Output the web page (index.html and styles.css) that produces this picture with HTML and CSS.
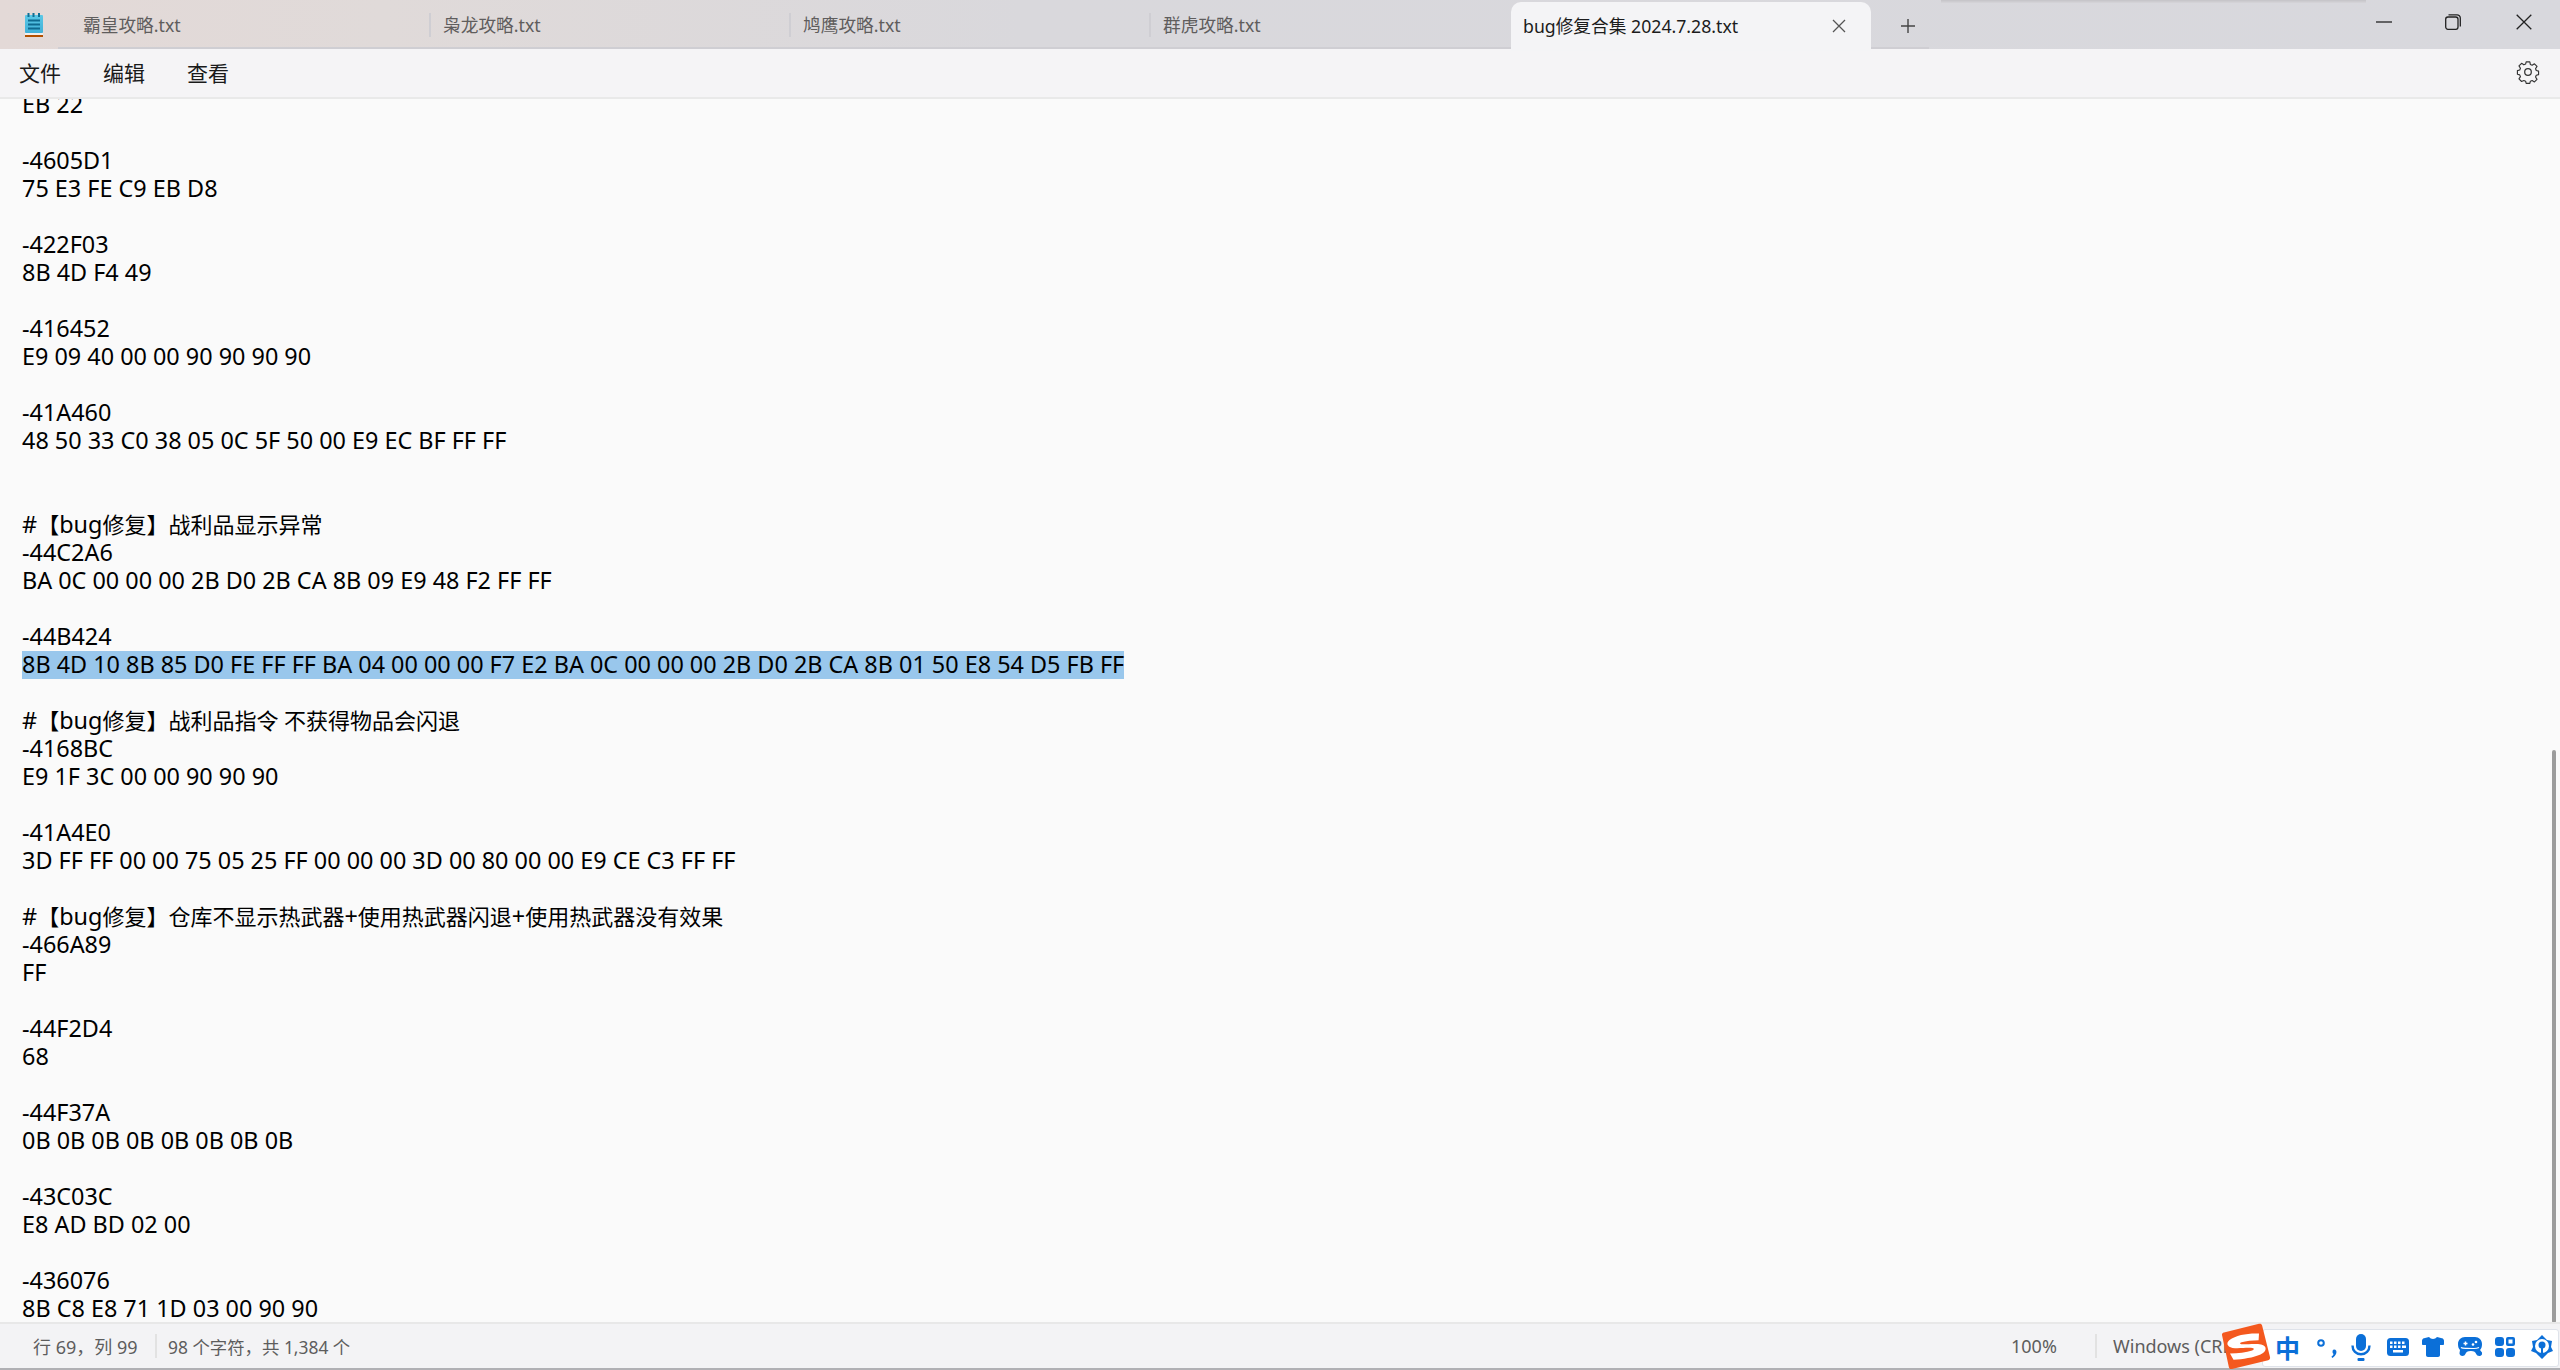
FILE: index.html
```html
<!DOCTYPE html>
<html lang="zh-CN">
<head>
<meta charset="utf-8">
<title>bug修复合集 2024.7.28.txt</title>
<link rel="stylesheet" href="styles.css">
</head>
<body>
<div class="window">
  <header class="titlebar">
    <div class="app-icon">
      <svg width="18" height="24" viewBox="0 0 18 24">
        <defs><linearGradient id="nb" x1="0" y1="0" x2="0" y2="1"><stop offset="0" stop-color="#5cc8e6"/><stop offset="1" stop-color="#3fb0d8"/></linearGradient></defs>
        <rect x="0" y="2" width="18" height="18" rx="1" fill="url(#nb)"/>
        <path d="M2.5 0h2v4h-2zM7.500 0h2v4h-2zM13 0h2v4h-2z" fill="#0f6f94"/>
        <path d="M3 6.500h12v2H3zM3 10.500h12v2H3zM3 14.500h12v2H3z" fill="#0f6a90"/>
        <rect x="0" y="20" width="18" height="2" fill="#f2efec"/>
        <rect x="0" y="22" width="18" height="2" fill="#b25000"/>
      </svg>
    </div>
    <nav class="tabstrip">
      <div class="tab">霸皇攻略.txt</div>
      <div class="tab tab-sep">枭龙攻略.txt</div>
      <div class="tab tab-sep">鸠鹰攻略.txt</div>
      <div class="tab tab-sep">群虎攻略.txt</div>
      <div class="tab tab-active">
        <span>bug修复合集 2024.7.28.txt</span>
        <svg class="tab-close" width="14" height="14" viewBox="0 0 14 14"><path d="M1 1l12 12M13 1L1 13" stroke="#555" stroke-width="1.300" fill="none"/></svg>
      </div>
      <div class="tab-add">
        <svg width="16" height="16" viewBox="0 0 16 16"><path d="M8 1v14M1 8h14" stroke="#444" stroke-width="1.400" fill="none"/></svg>
      </div>
    </nav>
    <div class="controls">
      <svg class="ctl-min" width="16" height="2" viewBox="0 0 16 2"><path d="M0 1h16" stroke="#222" stroke-width="1.300"/></svg>
      <svg class="ctl-max" width="16" height="16" viewBox="0 0 16 16"><rect x="0.700" y="3" width="12.300" height="12.300" rx="2.200" fill="none" stroke="#222" stroke-width="1.300"/><path d="M3.500 0.800h8.500a3.300 3.300 0 0 1 3.300 3.300v8.400" fill="none" stroke="#222" stroke-width="1.300"/></svg>
      <svg class="ctl-close" width="16" height="16" viewBox="0 0 16 16"><path d="M0.700 0.700l14.600 14.600M15.300 0.700L0.700 15.300" stroke="#222" stroke-width="1.300" fill="none"/></svg>
    </div>
    <div class="top-shadow"></div>
  </header>

  <div class="menubar">
    <div class="menu-items">
      <span>文件</span><span>编辑</span><span>查看</span>
    </div>
    <svg class="gear" width="24" height="24" viewBox="0 0 24 24" fill="none" stroke="#333" stroke-width="1.250" stroke-linejoin="round">
      <path d="M10 1.500h4l.6 2.900 1.900.8 2.500-1.600 2.800 2.800-1.600 2.500.8 1.900 2.500.7v3.900l-2.500.7-.8 1.900 1.600 2.500-2.800 2.800-2.500-1.600-1.900.8-.6 2.400h-4l-.6-2.400-1.900-.8L5 22.800l-2.800-2.800 1.600-2.500-.8-1.900-2.500-.7V11l2.500-.7.8-1.900-1.600-2.500L5 3.100l2.500 1.600 1.900-.8z" transform="translate(12 12) scale(.92) translate(-12 -12.500)"/>
      <circle cx="12" cy="12" r="3.300"/>
    </svg>
  </div>

  <main class="editor">
    <div class="doc">
      <div class="ln">EB 22</div>
      <div class="ln"></div>
      <div class="ln">-4605D1</div>
      <div class="ln">75 E3 FE C9 EB D8</div>
      <div class="ln"></div>
      <div class="ln">-422F03</div>
      <div class="ln">8B 4D F4 49</div>
      <div class="ln"></div>
      <div class="ln">-416452</div>
      <div class="ln">E9 09 40 00 00 90 90 90 90</div>
      <div class="ln"></div>
      <div class="ln">-41A460</div>
      <div class="ln">48 50 33 C0 38 05 0C 5F 50 00 E9 EC BF FF FF</div>
      <div class="ln"></div>
      <div class="ln"></div>
      <div class="ln">#<span class="cjk">【</span>bug<span class="cjk">修复】战利品显示异常</span></div>
      <div class="ln">-44C2A6</div>
      <div class="ln">BA 0C 00 00 00 2B D0 2B CA 8B 09 E9 48 F2 FF FF</div>
      <div class="ln"></div>
      <div class="ln">-44B424</div>
      <div class="ln"><span class="sel">8B 4D 10 8B 85 D0 FE FF FF BA 04 00 00 00 F7 E2 BA 0C 00 00 00 2B D0 2B CA 8B 01 50 E8 54 D5 FB FF</span></div>
      <div class="ln"></div>
      <div class="ln">#<span class="cjk">【</span>bug<span class="cjk">修复】战利品指令 不获得物品会闪退</span></div>
      <div class="ln">-4168BC</div>
      <div class="ln">E9 1F 3C 00 00 90 90 90</div>
      <div class="ln"></div>
      <div class="ln">-41A4E0</div>
      <div class="ln">3D FF FF 00 00 75 05 25 FF 00 00 00 3D 00 80 00 00 E9 CE C3 FF FF</div>
      <div class="ln"></div>
      <div class="ln">#<span class="cjk">【</span>bug<span class="cjk">修复】仓库不显示热武器</span>+<span class="cjk">使用热武器闪退</span>+<span class="cjk">使用热武器没有效果</span></div>
      <div class="ln">-466A89</div>
      <div class="ln">FF</div>
      <div class="ln"></div>
      <div class="ln">-44F2D4</div>
      <div class="ln">68</div>
      <div class="ln"></div>
      <div class="ln">-44F37A</div>
      <div class="ln">0B 0B 0B 0B 0B 0B 0B 0B</div>
      <div class="ln"></div>
      <div class="ln">-43C03C</div>
      <div class="ln">E8 AD BD 02 00</div>
      <div class="ln"></div>
      <div class="ln">-436076</div>
      <div class="ln">8B C8 E8 71 1D 03 00 90 90</div>
    </div>
    <div class="scroll-thumb"></div>
  </main>

  <footer class="statusbar">
    <div class="st st-pos">行 69，列 99</div>
    <div class="st-sep"></div>
    <div class="st st-count">98 个字符，共 1,384 个</div>
    <div class="st-spacer"></div>
    <div class="st st-zoom">100%</div>
    <div class="st-sep"></div>
    <div class="st st-enc">Windows (CRLF)</div>
  </footer>

  <div class="ime">
    <svg class="ime-logo" width="50" height="47" viewBox="0 0 50 47">
      <path d="M3 9.500 38 .8c1.500-.4 2.700.3 3.100 1.700L49 34c.4 1.500-.4 2.800-1.800 3.200L11 46c-1.500.3-2.700-.3-3.100-1.800L1 12c-.3-1.200.6-2.200 2-2.500z" fill="#f4581e"/>
      <path d="M38 10.500C27 10 15 12 8.500 17c-4.500 3.800-1.500 7.800 5.500 8.200 6 .3 13-.8 17.500-.1 2 .4 1.800 1.600-.3 2.300-6 1.700-14 3-22.200 3.100l3.500 6.300c9.500-.3 20-2.200 27-5.200 6.500-3 7-8.400.6-10-5.200-1.200-13.700-.1-19-.3-2.500-.1-2.600-1.300-.5-2 4.200-1.400 11-2 17-2.100z" fill="#fff"/>
    </svg>
    <span class="ime-zh">中</span>
    <svg class="ime-ic ic-punc" width="24" height="24" viewBox="0 0 24 24"><circle cx="5" cy="7" r="2.800" fill="none" stroke="#0b6fd8" stroke-width="2"/><path d="M18 13.500c2.200 0 3 2 2.200 4-.7 1.800-2 3.400-3.800 4.500l-1-1.200c1.100-.9 1.800-1.900 2.200-2.900-1.500-.6-1.400-4.400.4-4.400z" fill="#0b6fd8"/></svg>
    <svg class="ime-ic ic-mic" width="20" height="28" viewBox="0 0 20 28"><rect x="5" y="0" width="10" height="17" rx="5" fill="#0b6fd8"/><path d="M1.500 11.500c0 5.300 3.700 8.800 8.500 8.800s8.500-3.500 8.500-8.800" fill="none" stroke="#0b6fd8" stroke-width="2.400"/><rect x="6.500" y="24" width="7" height="3" rx="1" fill="#0b6fd8"/></svg>
    <svg class="ime-ic ic-kbd" width="22" height="18" viewBox="0 0 22 18"><rect width="22" height="18" rx="3.500" fill="#0b6fd8"/><path d="M3 3.500h2.500V6H3zM7 3.500h2.500V6H7zM11 3.500h2.500V6H11zM15 3.500h2.500V6H15zM3 7.500h2.500V10H3zM7 7.500h2.500V10H7zM11 7.500h2.500V10H11zM15 7.500h4V10h-4zM6 12h10v2.500H6z" fill="#fff"/></svg>
    <svg class="ime-ic ic-shirt" width="22" height="20" viewBox="0 0 22 20"><path d="M7 0c1 1.300 2.500 2 4 2s3-.7 4-2l5 1.200c1.200.3 2 1.300 2 2.500V7c0 .7-.5 1-1.200 1H18v10c0 1.200-.8 2-2 2H6c-1.200 0-2-.8-2-2V8H1.200C.5 8 0 7.700 0 7V3.700c0-1.200.8-2.200 2-2.500z" fill="#0b6fd8"/></svg>
    <svg class="ime-ic ic-game" width="24" height="20" viewBox="0 0 24 20"><path d="M7 0h10c4 0 7 3 7 7 0 2.500-.5 4.500-2 6l2 2.500c.6 2-1 3.500-2.800 3.500-1.500 0-2.500-.8-3-2-.8-2-2-3-5.200-3h-.4c-3.200 0-4.400 1-5.200 3-.5 1.200-1.500 2-3 2-1.800 0-3.400-1.500-2.800-3.500L2 13c-1.500-1.500-2-3.500-2-6 0-4 3-7 7-7z" fill="#0b6fd8"/><path d="M3 10.500c1 .8 4 1 6 .9 2 0 4 0 6 .1 2 .1 4 0 6-1" fill="none" stroke="#fff" stroke-width="1.200"/><path d="M5.500 6.500h4M7.500 4.500v4" stroke="#fff" stroke-width="1.500"/><circle cx="15" cy="7.500" r="1.300" fill="#fff"/><circle cx="18" cy="5" r="1.300" fill="#fff"/></svg>
    <svg class="ime-ic ic-apps" width="20" height="20" viewBox="0 0 20 20"><rect width="9" height="9" rx="3" fill="#0b6fd8"/><rect x="11" width="9" height="9" rx="2" fill="#0b6fd8"/><rect x="13.500" y="2.500" width="4" height="4" fill="#fff"/><rect y="11" width="9" height="9" rx="3" fill="#0b6fd8"/><rect x="11" y="11" width="9" height="9" rx="3" fill="#0b6fd8"/></svg>
    <svg class="ime-ic ic-last" width="22" height="24" viewBox="0 0 22 24"><path d="M11 0l5 5 5 1-1 6 2 4-5 2-3 3-3 3-3-3-3-3-5-2 2-4-1-6 5-1z" fill="#0b6fd8"/><circle cx="11" cy="11" r="7" fill="#fff"/><circle cx="11" cy="10" r="3.500" fill="#0b6fd8"/><path d="M10 11h2v9h-2z" fill="#0b6fd8"/></svg>
  </div>
</div>
</body>
</html>
```
FILE: styles.css
```css
* { box-sizing: border-box; }
html, body { margin: 0; padding: 0; width: 2560px; height: 1370px; overflow: hidden; }
body { font-family: "Noto Sans", "Noto Sans CJK SC", sans-serif; background: #fafafa; }

.window { position: relative; display: flex; flex-direction: column; width: 2560px; height: 1370px; }

/* title bar */
.titlebar {
  position: relative;
  display: flex;
  height: 49px;
  flex: none;
  background: linear-gradient(90deg, #e3d9d7 0%, #e0dad9 15%, #d9d8dc 40%, #d8d8dd 100%);
}
.app-icon { width: 58px; flex: none; padding: 13px 0 0 25px; line-height: 0; }
.tabstrip {
  display: flex;
  width: 1871px;
  flex: none;
  padding-left: 13px;
  border-bottom: 2px solid #cfced3;
}
.tab {
  position: relative;
  width: 360px;
  flex: none;
  height: 47px;
  padding: 0 12px;
  font-size: 17.700px;
  line-height: 50px;
  color: #5f5d5d;
}
.tab-sep::before {
  content: "";
  position: absolute;
  left: -2px;
  top: 13px;
  width: 2px;
  height: 24px;
  background: #cfced3;
}
.tab-active {
  display: flex;
  align-items: flex-start;
  justify-content: space-between;
  height: 49px;
  margin-top: 2px;
  padding: 0 25px 0 12px;
  line-height: 48px;
  color: #1c1c1c;
  background: #f4f4f6;
  border-radius: 10px 10px 0 0;
}
.tab-close { margin-top: 17px; }
.tab-add { width: 70px; flex: none; padding: 18px 0 0 29px; line-height: 0; }
.controls { flex: 1; position: relative; display: flex; align-items: center; padding-left: 447px; height: 44px; }
.ctl-min { flex: none; }
.ctl-max { flex: none; margin-left: 53px; }
.ctl-close { flex: none; margin-left: 55px; }
.top-shadow {
  position: absolute;
  left: 1941px;
  top: 0;
  width: 425px;
  height: 3px;
  background: linear-gradient(180deg, #c4c3c7, #d6d5d9);
}

/* menu bar */
.menubar {
  display: flex;
  align-items: center;
  justify-content: space-between;
  height: 50px;
  flex: none;
  padding: 0 20px 2px 19px;
  background: #f5f4f6;
  border-bottom: 2px solid #e9e9e9;
}
.menu-items { display: flex; gap: 42px; font-size: 21px; color: #1a1a1a; }
.gear { flex: none; }

/* editor */
.editor { position: relative; flex: 1; overflow: hidden; background: #fafafa; }
.doc {
  margin-top: -8px;
  padding-left: 22px;
  font-size: 23.400px;
  line-height: 26px;
  color: #000;
}
.ln { height: 28px; white-space: pre; }
.cjk { font-size: 22px; }
.sel { display: inline-block; height: 28px; background: #99c7ec; }
.scroll-thumb {
  position: absolute;
  right: 4px;
  top: 651px;
  width: 4px;
  height: 573px;
  border-radius: 2px;
  background: #9c9c9c;
}

/* status bar */
.statusbar {
  display: flex;
  align-items: center;
  height: 48px;
  flex: none;
  background: #f3f3f5;
  border-top: 2px solid #e8e8e8;
  border-bottom: 2px solid #b0b0b4;
  font-size: 18px;
  color: #5d5d5d;
}
.st-pos { width: 155px; padding-left: 33px; }
.st-sep { width: 2px; height: 24px; flex: none; background: #e2e2e2; }
.st-count { padding-left: 11px; font-size: 17.400px; }
.st-spacer { flex: 1; }
.st-zoom { width: 84px; }
.st-enc { width: 463px; padding-left: 16px; white-space: nowrap; }

/* floating input method bar */
.ime {
  position: absolute;
  left: 2262px;
  top: 1329px;
  width: 297px;
  height: 38px;
  background: #fff;
  border: 1px solid #dfe3ea;
  border-radius: 3px;
}
.ime-logo { position: absolute; left: -42px; top: -7px; }
.ime-zh {
  position: absolute;
  left: 12px;
  top: -1px;
  font-family: "Noto Sans CJK SC", sans-serif;
  font-size: 25px;
  font-weight: 700;
  line-height: 36px;
  color: #0b6fd8;
}
.ime-ic { position: absolute; }
.ic-punc { left: 53px; top: 6px; }
.ic-mic { left: 88px; top: 4px; }
.ic-kbd { left: 124px; top: 8px; }
.ic-shirt { left: 159px; top: 7px; }
.ic-game { left: 195px; top: 7px; }
.ic-apps { left: 232px; top: 7px; }
.ic-last { left: 268px; top: 5px; }
```
